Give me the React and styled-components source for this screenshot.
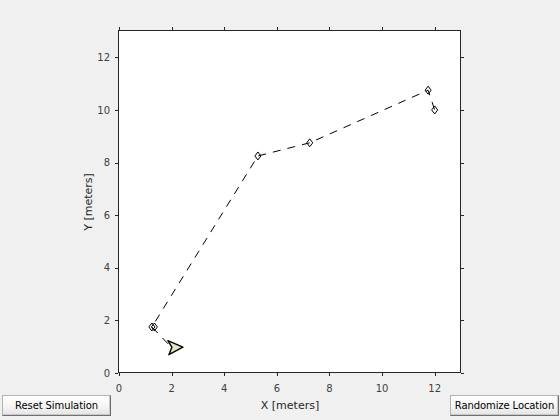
import React from "react";
import styled, { createGlobalStyle } from "styled-components";

const GlobalStyle = createGlobalStyle`
  html, body {
    margin: 0;
    padding: 0;
    background: #f0f0f0;
  }
`;

const Figure = styled.div`
  width: 560px;
  height: 420px;
  background: #f0f0f0;
  display: flex;
  flex-direction: column;
  overflow: hidden;
  font-family: "DejaVu Sans", Verdana, sans-serif;
`;

const Plot = styled.svg`
  display: block;
  width: 560px;
  height: 393px;
  flex: none;
`;

const ControlBar = styled.div`
  display: grid;
  grid-template-columns: auto 1fr auto;
  align-items: center;
  height: 27px;
  padding: 2px 1px 4px 2px;
  box-sizing: border-box;
`;

const AxisLabel = styled.span`
  justify-self: center;
  padding-left: 19px;
  font-size: 11px;
  color: #262626;
  white-space: nowrap;
`;

const Button = styled.button`
  height: 21px;
  width: ${(p) => p.$w}px;
  padding: 0;
  font-family: "DejaVu Sans", Verdana, sans-serif;
  font-size: 10px;
  letter-spacing: -0.1px;
  color: #000;
  background: linear-gradient(#ffffff 0%, #f6f6f6 50%, #e4e4e4 100%);
  border: 1px solid #b4b4b4;
  border-right-color: #6f6f6f;
  border-bottom-color: #6f6f6f;
  box-shadow: inset -1px -1px 0 #c8c8c8;
  border-radius: 0;
  cursor: default;
`;

// axes geometry (pixels per meter, origin at bottom left of the box)
const S = 342 / 13;
const X0 = 119;
const Y0 = 373;
const px = (x) => X0 + x * S;
const py = (y) => Y0 - y * S;
const TICKS = [0, 2, 4, 6, 8, 10, 12];

const waypoints = [
  [1.25, 1.75],
  [5.28, 8.25],
  [7.25, 8.75],
  [11.75, 10.75],
  [12.0, 10.0],
];

const vehicle = { x: 2.2, y: 1.0 };

const Diamond = ({ cx, cy }) => (
  <polygon
    points={`${cx},${cy - 4} ${cx + 3},${cy} ${cx},${cy + 4} ${cx - 3},${cy}`}
    fill="none"
    stroke="#000"
    strokeWidth="1"
  />
);

const Axes = () => {
  const vx = px(vehicle.x);
  const vy = py(vehicle.y);
  const trail = [[vx - 6, vy], ...waypoints.map(([x, y]) => [px(x), py(y)])];

  return (
    <Plot viewBox="0 0 560 393">
      <rect x="118.5" y="30.5" width="342" height="342" fill="#fff" />

      <polyline
        points={trail.map((p) => p.join(",")).join(" ")}
        fill="none"
        stroke="#000"
        strokeWidth="1"
        strokeDasharray="8 7"
        strokeDashoffset="-4"
      />

      {waypoints.map(([x, y], i) => (
        <Diamond key={i} cx={px(x)} cy={py(y)} />
      ))}
      <Diamond cx={px(1.25) + 2.5} cy={py(1.75)} />

      <polygon
        points={`${vx - 9},${vy - 6} ${vx + 6},${vy + 0.5} ${vx - 8},${vy + 8} ${vx - 5},${vy + 0.5}`}
        fill="#dfe8c4"
        stroke="#000"
        strokeWidth="1.4"
        strokeLinejoin="round"
      />

      <g stroke="#262626" strokeWidth="1" shapeRendering="crispEdges">
        <rect x="118.5" y="30.5" width="342" height="342" fill="none" />
        {TICKS.map((t) => (
          <g key={t}>
            <line x1={Math.round(px(t)) + 0.5} x2={Math.round(px(t)) + 0.5} y1="373" y2="376" />
            <line x1={Math.round(px(t)) + 0.5} x2={Math.round(px(t)) + 0.5} y1="30" y2="27" />
            <line y1={Math.round(py(t)) + 0.5} y2={Math.round(py(t)) + 0.5} x1="118" x2="115" />
            <line y1={Math.round(py(t)) + 0.5} y2={Math.round(py(t)) + 0.5} x1="461" x2="464" />
          </g>
        ))}
      </g>

      <g fill="#404040" fontSize="10" fontFamily="DejaVu Sans, sans-serif">
        {TICKS.map((t) => (
          <text key={`x${t}`} x={px(t)} y="392" textAnchor="middle">
            {t}
          </text>
        ))}
        {TICKS.map((t) => (
          <text key={`y${t}`} x="110" y={py(t) + 3.6} textAnchor="end">
            {t}
          </text>
        ))}
      </g>

      <text
        x="0"
        y="0"
        fontSize="11"
        fill="#262626"
        fontFamily="DejaVu Sans, sans-serif"
        textAnchor="middle"
        transform={`translate(92 ${(31 + 373) / 2}) rotate(-90)`}
      >
        Y [meters]
      </text>
    </Plot>
  );
};

const App = () => (
  <>
    <GlobalStyle />
    <Figure>
      <Axes />
      <ControlBar>
        <Button $w={109}>Reset Simulation</Button>
        <AxisLabel>X [meters]</AxisLabel>
        <Button $w={109}>Randomize Location</Button>
      </ControlBar>
    </Figure>
  </>
);

export default App;
